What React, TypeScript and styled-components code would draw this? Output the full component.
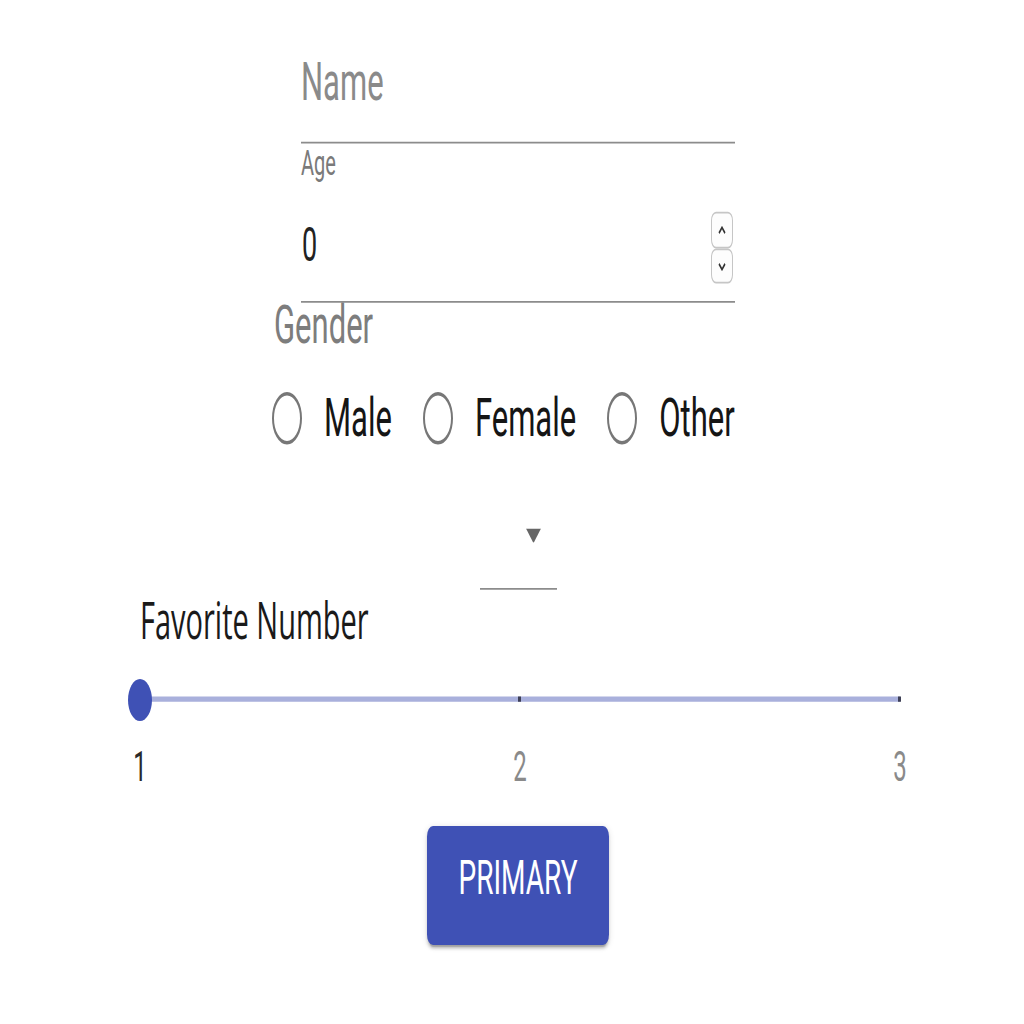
import React from "react";
import styled, { createGlobalStyle } from "styled-components";

// the reference is a screenshot stretched vertically, so the whole stage is
// laid out at natural size and stretched by the same factor
const STRETCH = 1.75;

const GlobalStyle = createGlobalStyle`
  *, *::before, *::after { box-sizing: border-box; }
  html { overflow: hidden; }
  html, body { margin: 0; padding: 0; background: #fff; }
  body { min-height: 1024px; }
`;

const Stage = styled.div`
  width: 1024px;
  height: ${1024 / STRETCH}px;
  padding-left: 12px;
  display: flex;
  flex-direction: column;
  align-items: center;
  transform: scaleY(${STRETCH});
  transform-origin: top left;
  font-family: Roboto, "Liberation Sans", sans-serif;
`;

const Form = styled.div`
  width: 434px;
  margin-top: 28px;
  display: flex;
  flex-direction: column;
  flex-shrink: 0;
`;

const TextInput = styled.input`
  width: 100%;
  height: 53.5px;
  padding: 0 0 15px 0;
  border: 0;
  border-bottom: 1.5px solid #8c8c8c;
  outline: none;
  background: transparent;
  font-family: inherit;
  font-size: 31px;
  line-height: 37px;
  color: #222;

  &::placeholder {
    color: #8a8a8a;
    opacity: 1;
  }
`;

const SmallLabel = styled.label`
  margin-top: 1px;
  font-size: 20px;
  line-height: 20px;
  color: #7a7a7a;
`;

const NumberRow = styled.div`
  height: 54.8px;
  margin-top: 16px;
  padding-bottom: 7.3px;
  border-bottom: 1.5px solid #8c8c8c;
  display: flex;
  align-items: center;
`;

const NumberInput = styled.input`
  flex: 1;
  height: 32px;
  margin-top: -4px;
  padding: 0 0 0 1px;
  border: 0;
  outline: none;
  background: transparent;
  font-family: inherit;
  font-size: 27px;
  line-height: 32px;
  color: #222;
  appearance: textfield;
  -moz-appearance: textfield;

  &::-webkit-inner-spin-button,
  &::-webkit-outer-spin-button {
    -webkit-appearance: none;
    margin: 0;
  }
`;

const Spinner = styled.div`
  width: 22px;
  margin-right: 2px;
  display: flex;
  flex-direction: column;
`;

const SpinBox = styled.div`
  height: 20.5px;
  border: 1px solid #c6c6c6;
  border-radius: 5px;
  display: flex;
  align-items: center;
  justify-content: center;
  background: #fdfdfd;
`;

const GroupLabel = styled.div`
  margin: -2px 0 0 -27px;
  font-size: 31px;
  line-height: 29px;
  color: #7d7d7d;
`;

const RadioRow = styled.div`
  height: 40px;
  margin: 18.8px 0 0 -29px;
  display: flex;
  align-items: center;
`;

const RadioOption = styled.label`
  display: flex;
  align-items: center;
  gap: 22px;
  margin-right: 31px;
  font-size: 31px;
  line-height: 40px;
  color: #151515;

  &:last-child {
    margin-right: 0;
  }
`;

const RadioCircle = styled.input`
  appearance: none;
  -webkit-appearance: none;
  width: 30px;
  height: 30px;
  margin: 0;
  border: 2.5px solid #777;
  border-radius: 50%;
  background: #fff;
`;

const SelectBox = styled.div`
  width: 77px;
  height: 41.5px;
  flex-shrink: 0;
  margin-top: 36px;
  padding: 7px 15px 0 0;
  border-bottom: 1.5px solid #8c8c8c;
  display: flex;
  justify-content: flex-end;
  align-items: flex-start;
`;

const SliderSection = styled.div`
  width: 760px;
  flex-shrink: 0;
  margin: 3px 0 0 4px;
  display: flex;
  flex-direction: column;
`;

const SliderLabel = styled.div`
  font-family: "Open Sans", Roboto, sans-serif;
  font-size: 29px;
  line-height: 28px;
  color: #1a1a1a;
`;

const SliderTrack = styled.div`
  position: relative;
  height: 24px;
  margin-top: 20px;
  display: flex;
  align-items: center;
`;

const Rail = styled.div`
  width: 100%;
  height: 3px;
  background: #a9b0dc;
`;

const Tick = styled.span<{ $at: number }>`
  position: absolute;
  top: 10.5px;
  left: ${(p) => p.$at}%;
  width: 3px;
  height: 3px;
  margin-left: -2px;
  background: #3d3f55;
`;

const Thumb = styled.span`
  position: absolute;
  top: 0;
  left: -12px;
  width: 24px;
  height: 24px;
  border-radius: 50%;
  background: #3f51b5;
`;

const Marks = styled.div`
  height: 24px;
  margin-top: 14px;
  display: flex;
  justify-content: space-between;
`;

const Mark = styled.span<{ $active?: boolean }>`
  width: 0;
  display: flex;
  justify-content: center;
  font-size: 24px;
  line-height: 24px;
  color: ${(p) => (p.$active ? "#2a2a2a" : "#8a8a8a")};
`;

const PrimaryButton = styled.button`
  width: 182px;
  height: 68.5px;
  flex-shrink: 0;
  margin-top: 22.1px;
  padding: 0 0 8px 0;
  border: 0;
  border-radius: 6px;
  background: #3f51b5;
  color: #fff;
  font-family: inherit;
  font-size: 28px;
  line-height: 28px;
  box-shadow: 0 3px 1px -2px rgba(0, 0, 0, 0.2), 0 2px 2px 0 rgba(0, 0, 0, 0.14),
    0 1px 5px 0 rgba(0, 0, 0, 0.12);
`;

const Chevron = ({ up }: { up?: boolean }) => (
  <svg width="8" height="5" viewBox="0 0 8 5">
    <path
      d={up ? "M1 4.2 L4 1 L7 4.2" : "M1 0.8 L4 4 L7 0.8"}
      fill="none"
      stroke="#333"
      strokeWidth="1.4"
    />
  </svg>
);

const genders = ["Male", "Female", "Other"];

export default function App() {
  return (
    <>
      <GlobalStyle />
      <Stage>
        <Form>
          <TextInput placeholder="Name" />
          <SmallLabel>Age</SmallLabel>
          <NumberRow>
            <NumberInput type="number" defaultValue={0} />
            <Spinner>
              <SpinBox>
                <Chevron up />
              </SpinBox>
              <SpinBox>
                <Chevron />
              </SpinBox>
            </Spinner>
          </NumberRow>
          <GroupLabel>Gender</GroupLabel>
          <RadioRow>
            {genders.map((g) => (
              <RadioOption key={g}>
                <RadioCircle type="radio" name="gender" value={g} />
                {g}
              </RadioOption>
            ))}
          </RadioRow>
        </Form>

        <SelectBox>
          <svg width="17" height="8.4" viewBox="0 0 17 8.4">
            <polygon points="1,0 16,0 8.5,8.4" fill="#666" />
          </svg>
        </SelectBox>

        <SliderSection>
          <SliderLabel>Favorite Number</SliderLabel>
          <SliderTrack>
            <Rail />
            <Tick $at={50} />
            <Tick $at={100} />
            <Thumb />
          </SliderTrack>
          <Marks>
            <Mark $active>1</Mark>
            <Mark>2</Mark>
            <Mark>3</Mark>
          </Marks>
        </SliderSection>

        <PrimaryButton>PRIMARY</PrimaryButton>
      </Stage>
    </>
  );
}
